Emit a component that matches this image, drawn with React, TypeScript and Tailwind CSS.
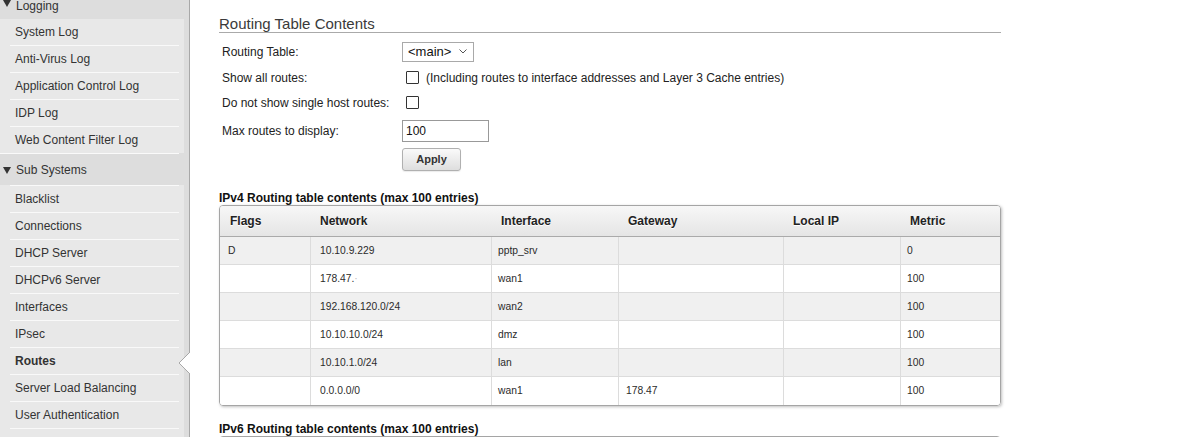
import React from "react";

type Route = {
  flags: string;
  network: React.ReactNode;
  iface: string;
  gateway: string;
  localIp: string;
  metric: string;
};

const routes: Route[] = [
  { flags: "D", network: "10.10.9.229", iface: "pptp_srv", gateway: "", localIp: "", metric: "0" },
  {
    flags: "",
    network: (
      <>
        178.47.<span className="text-[#bbb]">·</span>
      </>
    ),
    iface: "wan1",
    gateway: "",
    localIp: "",
    metric: "100",
  },
  { flags: "", network: "192.168.120.0/24", iface: "wan2", gateway: "", localIp: "", metric: "100" },
  { flags: "", network: "10.10.10.0/24", iface: "dmz", gateway: "", localIp: "", metric: "100" },
  { flags: "", network: "10.10.1.0/24", iface: "lan", gateway: "", localIp: "", metric: "100" },
  { flags: "", network: "0.0.0.0/0", iface: "wan1", gateway: "178.47", localIp: "", metric: "100" },
];

const logItems = ["System Log", "Anti-Virus Log", "Application Control Log", "IDP Log", "Web Content Filter Log"];
const subItems = [
  "Blacklist",
  "Connections",
  "DHCP Server",
  "DHCPv6 Server",
  "Interfaces",
  "IPsec",
  "Routes",
  "Server Load Balancing",
  "User Authentication",
  "",
];

function DownTriangle() {
  return (
    <svg width="8" height="7" viewBox="0 0 8 7" className="mr-[5px] ml-[3px] shrink-0">
      <polygon points="0,0 8,0 4,7" fill="#333" />
    </svg>
  );
}

function Separator() {
  return <div className="ml-[10px] w-[169px] h-px bg-[#f9f9f9]" />;
}

function MenuItem({ label, active, last }: { label: string; active?: boolean; last?: boolean }) {
  return (
    <div className="relative">
      <div
        className={
          "h-[26px] flex items-center pl-[15px] text-[12px] text-[#333] " + (active ? "font-bold" : "")
        }
      >
        {label}
      </div>
      {!last && <Separator />}
      {active && (
        <svg
          width="12"
          height="22"
          viewBox="0 0 12 22"
          className="absolute left-[178px] top-[4px] z-10"
        >
          <polygon points="12,0 1,11 12,22" fill="#fff" />
          <polyline points="12,0 1,11 12,22" fill="none" stroke="#a8a8a8" strokeWidth="1" />
        </svg>
      )}
    </div>
  );
}

function Checkbox() {
  return <div className="w-[13px] h-[13px] border border-[#333] bg-white rounded-[1px]" />;
}

// body cell left padding per column
const cellPad = ["pl-[8px]", "pl-[9px]", "pl-[6px]", "pl-[7px]", "pl-[7px]", "pl-[6px]"];

export default function App() {
  return (
    <div className="flex w-[1197px] h-[437px] overflow-hidden bg-white font-['Liberation_Sans',Arial,sans-serif] text-[#222]">
      {/* navigation */}
      <aside className="relative w-[190px] shrink-0 bg-[#dddddd] border-r border-[#a8a8a8]">
        <div className="h-[19px] flex items-start text-[12px] leading-[12px] text-[#333]">
          <DownTriangle />
          <span>Logging</span>
        </div>
        <div className="w-[184px] bg-[#e8e8e8]">
          {logItems.map((l, i) => (
            <MenuItem key={l} label={l} last={i === logItems.length - 1} />
          ))}
        </div>
        <div className="w-[179px] h-px bg-[#fafafa]" />
        <div className="h-[31px] flex items-center pt-[1px] text-[12px] text-[#333]">
          <DownTriangle />
          <span>Sub Systems</span>
        </div>
        <div className="w-[184px] bg-[#e8e8e8] h-full">
          <Separator />
          {subItems.map((l) => (
            <MenuItem key={l || "blank"} label={l} active={l === "Routes"} />
          ))}
        </div>
      </aside>

      {/* content */}
      <main className="pl-[29px]">
        <div className="w-[782px]">
          <h2 className="pt-[15px] text-[15px] leading-[17px] text-[#3a3a3a] border-b border-[#aaaaaa]">
            Routing Table Contents
          </h2>

          <div className="mt-[6px] text-[12px]">
            <div className="flex items-center h-[25px]">
              <div className="w-[183px] pl-[3px]">Routing Table:</div>
              <div className="w-[72px] h-[20px] border border-[#a9a9a9] bg-white flex items-center justify-between pl-[5px] pr-[6px]">
                <span className="text-[13px] leading-none text-[#111]">&lt;main&gt;</span>
                <svg width="8" height="5" viewBox="0 0 8 5">
                  <polyline points="0.5,0.5 4,4 7.5,0.5" fill="none" stroke="#555" strokeWidth="1" />
                </svg>
              </div>
            </div>
            <div className="flex items-center h-[26px] pt-[1px]">
              <div className="w-[183px] pl-[3px]">Show all routes:</div>
              <div className="ml-[4px]">
                <Checkbox />
              </div>
              <span className="ml-[7px]">
                (Including routes to interface addresses and Layer 3 Cache entries)
              </span>
            </div>
            <div className="flex items-center h-[25px]">
              <div className="w-[183px] pl-[3px]">Do not show single host routes:</div>
              <div className="ml-[4px]">
                <Checkbox />
              </div>
            </div>
            <div className="flex items-center h-[30px] pt-[1px]">
              <div className="w-[183px] pl-[3px]">Max routes to display:</div>
              <div className="w-[87px] h-[22px] border border-[#999] bg-white flex items-center pl-[3px] text-[12px] text-[#111]">
                100
              </div>
            </div>
            <div className="flex mt-[3px]">
              <div className="w-[183px]" />
              <button className="w-[59px] h-[23px] rounded-[3px] border border-[#b0b0b0] bg-linear-to-b from-[#fafafa] to-[#dedede] text-[11px] font-bold text-[#333] shadow-[0_1px_1px_rgba(0,0,0,0.08)]">
                Apply
              </button>
            </div>
          </div>

          <div className="mt-[20px] text-[12px] leading-[14px] font-bold text-[#111]">
            IPv4 Routing table contents (max 100 entries)
          </div>

          <div className="rounded-[4px] border border-[#a5a5a5] overflow-hidden shadow-[1px_1px_3px_rgba(0,0,0,0.25)]">
            <div className="grid grid-cols-[90px_181px_127px_165px_117px_100px] h-[31px] items-center border-b border-[#aaaaaa] bg-linear-to-b from-[#f7f7f7] to-[#e5e5e5] text-[12px] font-bold text-[#222] [text-shadow:0_1px_0_#fff]">
              {["Flags", "Network", "Interface", "Gateway", "Local IP", "Metric"].map((h) => (
                <div key={h} className="pl-[10px]">
                  {h}
                </div>
              ))}
            </div>
            {routes.map((r, i) => {
              const cells = [r.flags, r.network, r.iface, r.gateway, r.localIp, r.metric];
              return (
                <div
                  key={i}
                  className={
                    "grid grid-cols-[90px_181px_127px_165px_117px_100px] h-[28px] text-[10.3px] text-[#2b2b2b] " +
                    (i % 2 === 0 ? "bg-[#f0f0f0] " : "bg-white ") +
                    (i < routes.length - 1 ? "border-b border-[#dcdcdc]" : "")
                  }
                >
                  {cells.map((c, j) => (
                    <div
                      key={j}
                      className={
                        "flex items-center " + cellPad[j] + (j > 0 ? " border-l border-[#dcdcdc]" : "")
                      }
                    >
                      {c}
                    </div>
                  ))}
                </div>
              );
            })}
          </div>

          <div className="mt-[16px] text-[12px] leading-[14px] font-bold text-[#111]">
            IPv6 Routing table contents (max 100 entries)
          </div>
          <div className="rounded-t-[4px] border border-[#a5a5a5] h-[20px]" />
        </div>
      </main>
    </div>
  );
}
